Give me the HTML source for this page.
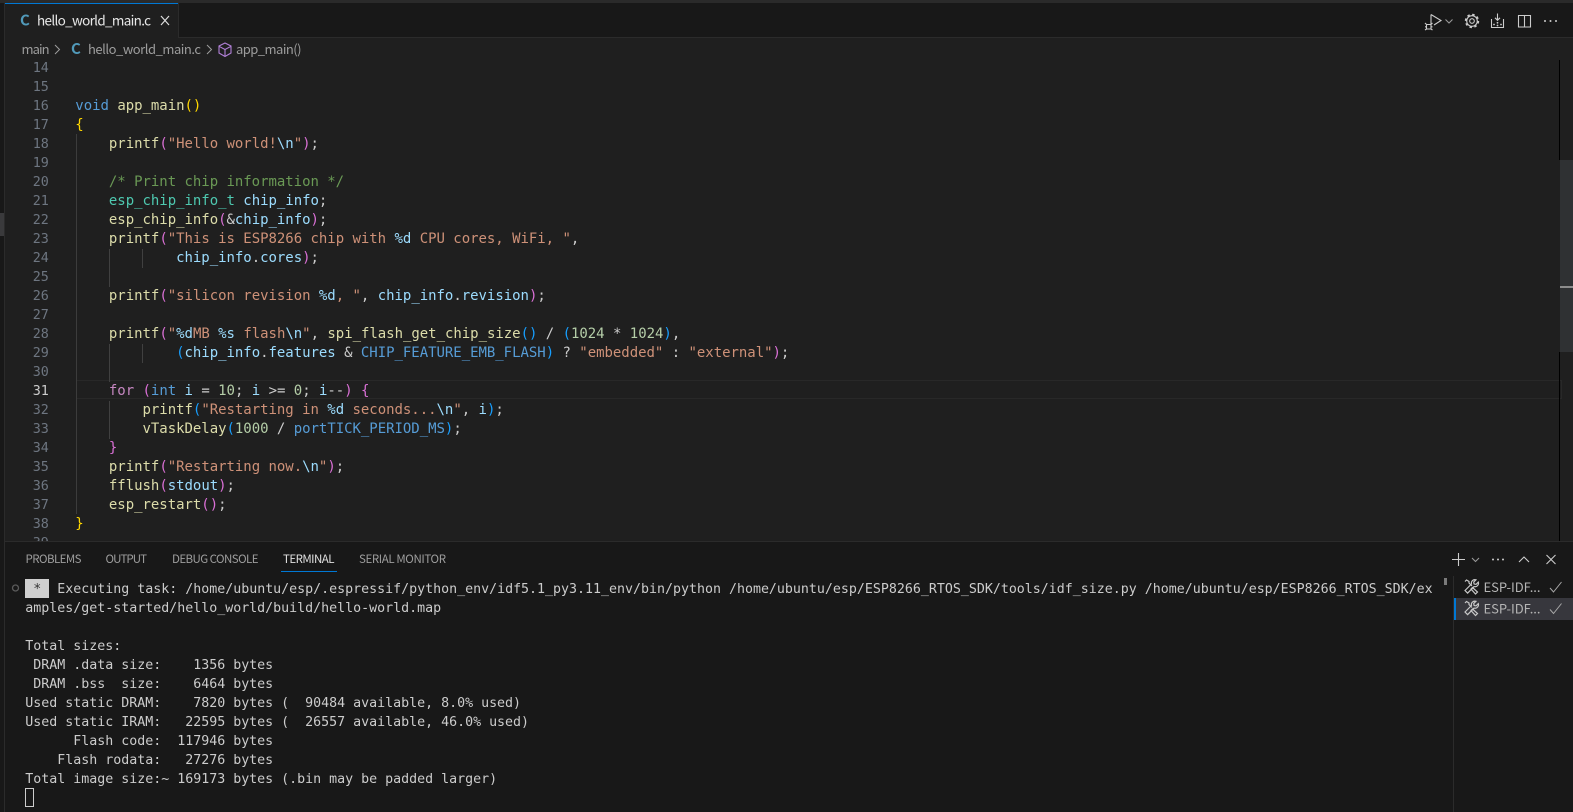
<!DOCTYPE html>
<html lang="en"><head><meta charset="utf-8"><title>hello_world_main.c</title>
<style>
html,body{margin:0;padding:0;background:#181818}
body{width:1573px;height:812px;position:relative;overflow:hidden}
div,pre,svg{position:absolute}
pre{margin:0;font-family:"DejaVu Sans Mono","Liberation Mono",monospace;white-space:pre}
#code,#nums{font-size:14px;line-height:19px;letter-spacing:-.03px}
#code{left:75.3px;top:0;color:#ccc}
#nums{left:0;width:48.8px;top:0;text-align:right;color:#6e7681;font-size:13.4px}
#term{left:25.3px;top:580px;font-size:13.29px;line-height:19px;color:#ccc}
.k{color:#569cd6}.c{color:#c586c0}.f{color:#dcdcaa}.s{color:#ce9178}.e{color:#9cdcfe}.v{color:#9cdcfe}.t{color:#4ec9b0}.m{color:#6a9955}.n{color:#b5cea8}.h{color:#569cd6}
.g{color:#ffd700}.p{color:#da70d6}.b{color:#179fff}
svg text{font-family:"Noto Sans CJK JP","Liberation Sans",sans-serif}
</style></head><body>
<div style="left:0;top:0;width:1573px;height:3px;background:#2a2a2a"></div>
<div style="left:0;top:3px;width:1573px;height:34px;background:#181818"></div>
<div style="left:0;top:37px;width:1573px;height:1px;background:#2b2b2b"></div>
<div style="left:5px;top:38px;width:1568px;height:504px;background:#1f1f1f"></div>
<div style="left:5px;top:3px;width:173px;height:35px;background:#1f1f1f"></div>
<div style="left:5px;top:3px;width:173px;height:1px;background:#0078d4"></div>
<div style="left:178px;top:3px;width:1px;height:34px;background:#2b2b2b"></div>
<div style="left:0;top:3px;width:4px;height:809px;background:#181818"></div>
<div style="left:4px;top:3px;width:1px;height:809px;background:#2b2b2b"></div>
<div style="left:0;top:213px;width:4px;height:23px;background:#3a3a3c"></div>

<div style="left:5px;top:60px;width:1568px;height:481.5px;overflow:hidden">
<div style="left:71px;top:320px;width:1484px;height:17px;border:1px solid #282828"></div>
<div style="left:70.500px;top:74px;width:1px;height:380px;background:#3c3c3c"></div>
<div style="left:104px;top:189px;width:1px;height:38px;background:#404040"></div>
<div style="left:104px;top:284px;width:1px;height:38px;background:#404040"></div>
<div style="left:104px;top:341px;width:1px;height:38px;background:#404040"></div>
<div style="left:137px;top:189px;width:1px;height:19px;background:#404040"></div>
<div style="left:137px;top:284px;width:1px;height:19px;background:#404040"></div>
</div>

<div style="left:5px;top:60px;width:1554px;height:481.5px;overflow:hidden">
<pre id="nums" style="top:-1px;left:-5px">14
15
16
17
18
19
20
21
22
23
24
25
26
27
28
29
30
<span style="color:#ccc">31</span>
32
33
34
35
36
37
38
39</pre>
<pre id="code" style="left:70.3px;top:-1px">


<span class="k">void</span> <span class="f">app_main</span><span class="g">()</span>
<span class="g">{</span>
    <span class="f">printf</span><span class="p">(</span><span class="s">"Hello world!</span><span class="e">\n</span><span class="s">"</span><span class="p">)</span>;

    <span class="m">/* Print chip information */</span>
    <span class="t">esp_chip_info_t</span> <span class="v">chip_info</span>;
    <span class="f">esp_chip_info</span><span class="p">(</span>&amp;<span class="v">chip_info</span><span class="p">)</span>;
    <span class="f">printf</span><span class="p">(</span><span class="s">"This is ESP8266 chip with </span><span class="e">%d</span><span class="s"> CPU cores, WiFi, "</span>,
            <span class="v">chip_info</span>.<span class="v">cores</span><span class="p">)</span>;

    <span class="f">printf</span><span class="p">(</span><span class="s">"silicon revision </span><span class="e">%d</span><span class="s">, "</span>, <span class="v">chip_info</span>.<span class="v">revision</span><span class="p">)</span>;

    <span class="f">printf</span><span class="p">(</span><span class="s">"</span><span class="e">%d</span><span class="s">MB </span><span class="e">%s</span><span class="s"> flash</span><span class="e">\n</span><span class="s">"</span>, <span class="f">spi_flash_get_chip_size</span><span class="b">()</span> / <span class="b">(</span><span class="n">1024</span> * <span class="n">1024</span><span class="b">)</span>,
            <span class="b">(</span><span class="v">chip_info</span>.<span class="v">features</span> &amp; <span class="h">CHIP_FEATURE_EMB_FLASH</span><span class="b">)</span> ? <span class="s">"embedded"</span> : <span class="s">"external"</span><span class="p">)</span>;

    <span class="c">for</span> <span class="p">(</span><span class="k">int</span> <span class="v">i</span> = <span class="n">10</span>; <span class="v">i</span> &gt;= <span class="n">0</span>; <span class="v">i</span>--<span class="p">)</span> <span class="p">{</span>
        <span class="f">printf</span><span class="b">(</span><span class="s">"Restarting in </span><span class="e">%d</span><span class="s"> seconds...</span><span class="e">\n</span><span class="s">"</span>, <span class="v">i</span><span class="b">)</span>;
        <span class="f">vTaskDelay</span><span class="b">(</span><span class="n">1000</span> / <span class="h">portTICK_PERIOD_MS</span><span class="b">)</span>;
    <span class="p">}</span>
    <span class="f">printf</span><span class="p">(</span><span class="s">"Restarting now.</span><span class="e">\n</span><span class="s">"</span><span class="p">)</span>;
    <span class="f">fflush</span><span class="p">(</span><span class="v">stdout</span><span class="p">)</span>;
    <span class="f">esp_restart</span><span class="p">()</span>;
<span class="g">}</span></pre>
</div>

<div style="left:1559px;top:60px;width:1px;height:100px;background:#000"></div>
<div style="left:1559px;top:352px;width:1px;height:190px;background:#000"></div>
<div style="left:1560px;top:160px;width:13px;height:192px;background:#2f3133"></div>
<div style="left:1560px;top:286px;width:13px;height:2px;background:#8c8c8c"></div>

<div style="left:5px;top:541px;width:1568px;height:1px;background:#2b2b2b"></div>
<div style="left:5px;top:542px;width:1568px;height:270px;background:#181818"></div>
<div style="left:281px;top:571px;width:56px;height:1px;background:#0078d4"></div>

<div style="left:25px;top:579px;width:24px;height:19px;background:#cfcfcf"></div>
<pre id="term"><span style="color:#333"> * </span> Executing task: /home/ubuntu/esp/.espressif/python_env/idf5.1_py3.11_env/bin/python /home/ubuntu/esp/ESP8266_RTOS_SDK/tools/idf_size.py /home/ubuntu/esp/ESP8266_RTOS_SDK/ex
amples/get-started/hello_world/build/hello-world.map

Total sizes:
 DRAM .data size:    1356 bytes
 DRAM .bss  size:    6464 bytes
Used static DRAM:    7820 bytes (  90484 available, 8.0% used)
Used static IRAM:   22595 bytes (  26557 available, 46.0% used)
      Flash code:  117946 bytes
    Flash rodata:   27276 bytes
Total image size:~ 169173 bytes (.bin may be padded larger)</pre>
<div style="left:25px;top:788px;width:7px;height:17px;border:1px solid #ccc"></div>
<div style="left:1444px;top:578px;width:3px;height:7px;background:#7a7a7a"></div>
<div style="left:1453px;top:576px;width:1px;height:236px;background:#2b2b2b"></div>
<div style="left:1454px;top:598px;width:119px;height:22px;background:#37373d"></div>
<div style="left:1454px;top:598px;width:1.5px;height:22px;background:#0078d4"></div>

<svg width="1573" height="812" viewBox="0 0 1573 812" style="left:0;top:0" fill="none">
<text x="37" y="25.500" font-size="13.500" textLength="114" fill="#e8e8e8">hello_world_main.c</text>
<g font-size="13" fill="#9d9d9d">
<text x="21.500" y="54" textLength="28">main</text>
<text x="88" y="54" textLength="113">hello_world_main.c</text>
<text x="236" y="54" textLength="65.500">app_main()</text>
</g>
<g font-weight="700" fill="#519aba">
<text x="20" y="25.500" font-size="15" textLength="10">C</text>
<text x="71" y="54" font-size="15" textLength="10">C</text>
</g>
<path d="M161 16l8 9M169 16l-8 9" stroke="#ddd" stroke-width="1.200"/>
<path d="M55 45l4.500 4.500L55 54M207 45l4.500 4.500L207 54" stroke="#9d9d9d" stroke-width="1"/>
<path d="M225 43l6 3v7l-6 3.500-6-3.500v-7zM219 46.300l6 3.200 6-3.200M225 49.500v7" stroke="#b180d7" stroke-width="1.100"/>

<g font-size="11.500" fill="#9d9d9d">
<text x="25.500" y="563" textLength="56">PROBLEMS</text>
<text x="105.500" y="563" textLength="41.500">OUTPUT</text>
<text x="172" y="563" textLength="86.500">DEBUG CONSOLE</text>
<text x="283" y="563" textLength="51.500" fill="#e0e0e0">TERMINAL</text>
<text x="359" y="563" textLength="87">SERIAL MONITOR</text>
</g>
<circle cx="15.500" cy="588" r="3" stroke="#5a5a5a" stroke-width="1.300"/>

<g stroke="#cccccc" stroke-width="1.100">
<path d="M1431 14.500v10M1431 14.500l10 6-7 4.500"/>
<path d="M1426.500 24.500h4.500v4.500h-4.500zM1425 23l1.500 1.500M1432.500 23l-1.500 1.500M1425 26.800h1.500M1431 26.800h1.500M1425 30l1.500-1M1432.500 30l-1.500-1"/>
<path d="M1445.500 19.500l3.500 3.500 3.500-3.500" stroke="#999"/>
<circle cx="1472" cy="21" r="2.300"/>
<circle cx="1472" cy="21" r="5.300"/>
<circle cx="1472" cy="21" r="6.300" stroke-width="1.800" stroke-dasharray="2.470 2.470"/>
<path d="M1491.500 19v8.500h12V19M1497.500 13.500v6.500M1495 17.800l2.500 2.500 2.500-2.500"/>
<path d="M1494 24.500h.01M1497.500 22.800h.01M1497.500 25.500h.01M1501 24.500h.01" stroke-width="1.800" stroke-linecap="round"/>
<path d="M1518.500 15.500h12v11.500h-12zM1524.500 15.500v11.500"/>
</g>
<g fill="#cccccc">
<circle cx="1545" cy="21" r="1"/><circle cx="1550.500" cy="21" r="1"/><circle cx="1556" cy="21" r="1"/>
<circle cx="1493" cy="559.500" r="1"/><circle cx="1498" cy="559.500" r="1"/><circle cx="1503" cy="559.500" r="1"/>
</g>
<g stroke="#cccccc" stroke-width="1.100">
<path d="M1452 559.500h13M1458.500 553v13"/>
<path d="M1472 558l3.500 3.500 3.500-3.500" stroke="#999"/>
<path d="M1519 562l5-5 5 5"/>
<path d="M1546.500 555l9 9M1555.500 555l-9 9"/>
</g>
<g stroke="#c8c8c8" stroke-width="1.200">
<path d="M1465 590.500l6.500-6.500a3.500 3.500 0 0 1 4.500-4.200l-2.300 2.300.4 1.900 1.900.4 2.300-2.300a3.500 3.500 0 0 1-4.200 4.500l-6.500 6.500z"/>
<path d="M1465 581.500l1.500-1.500 2.500 1.500v1.500l3 3M1472.500 587.500l5 4.500-2 2-4.500-5z"/>
</g>
<g stroke="#c8c8c8" stroke-width="1.200" transform="translate(0 21.500)">
<path d="M1465 590.500l6.500-6.500a3.500 3.500 0 0 1 4.500-4.200l-2.300 2.300.4 1.900 1.900.4 2.300-2.300a3.500 3.500 0 0 1-4.200 4.500l-6.500 6.500z"/>
<path d="M1465 581.500l1.500-1.500 2.500 1.500v1.500l3 3M1472.500 587.500l5 4.500-2 2-4.500-5z"/>
</g>
<g font-size="13" fill="#b5b5b5">
<text x="1483.500" y="592" textLength="57">ESP-IDF...</text>
<text x="1483.500" y="613.500" textLength="57">ESP-IDF...</text>
</g>
<path d="M1550 588l3.500 4 8-10M1550 609.500l3.500 4 8-10" stroke="#a8a8a8" stroke-width="1"/>
</svg>
</body></html>
